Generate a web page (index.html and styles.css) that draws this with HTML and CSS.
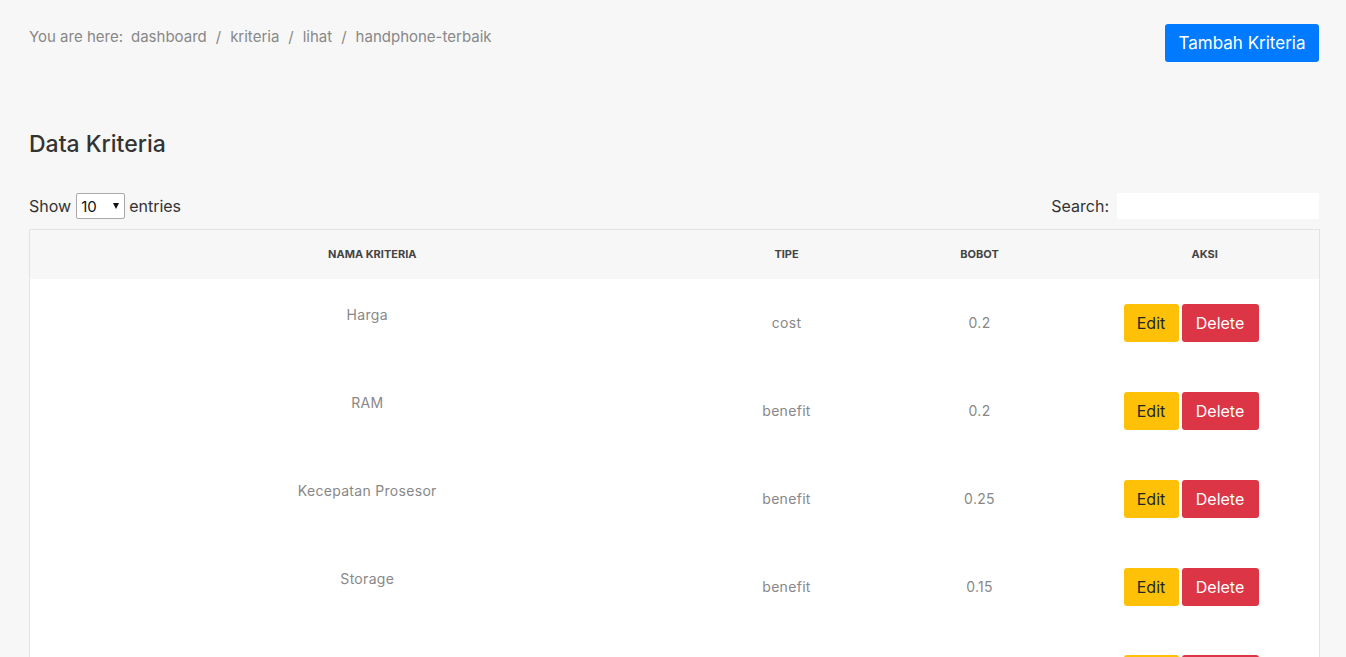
FILE: index.html
```html
<!DOCTYPE html>
<html lang="id">
<head>
<meta charset="utf-8">
<title>Data Kriteria</title>
<link rel="stylesheet" href="styles.css">
</head>
<body>
<div class="page">
  <div class="topbar">
    <nav class="crumbs">
      <span class="crumb-label">You are here:</span>
      <a class="crumb" href="#">dashboard</a>
      <span class="sep">/</span>
      <a class="crumb" href="#">kriteria</a>
      <span class="sep">/</span>
      <a class="crumb" href="#">lihat</a>
      <span class="sep">/</span>
      <span class="crumb">handphone-terbaik</span>
    </nav>
    <a class="btn btn-primary" href="#">Tambah Kriteria</a>
  </div>

  <h2 class="title">Data Kriteria</h2>

  <div class="controls">
    <label class="length">Show
      <span class="select-wrap">
        <select class="length-select">
          <option>10</option>
          <option>25</option>
          <option>50</option>
          <option>100</option>
        </select>
      </span>
      entries</label>
    <label class="search">Search: <input class="search-input" type="search"></label>
  </div>

  <table class="table">
    <colgroup>
      <col class="c1"><col class="c2"><col class="c3"><col class="c4">
    </colgroup>
    <thead>
      <tr>
        <th>Nama Kriteria</th>
        <th>Tipe</th>
        <th>Bobot</th>
        <th class="th-aksi">Aksi</th>
      </tr>
    </thead>
    <tbody>
      <tr>
        <td class="name-cell"><p class="name">Harga</p></td>
        <td>cost</td>
        <td>0.2</td>
        <td class="aksi"><a class="btn btn-warning" href="#">Edit</a><a class="btn btn-danger" href="#">Delete</a></td>
      </tr>
      <tr>
        <td class="name-cell"><p class="name">RAM</p></td>
        <td>benefit</td>
        <td>0.2</td>
        <td class="aksi"><a class="btn btn-warning" href="#">Edit</a><a class="btn btn-danger" href="#">Delete</a></td>
      </tr>
      <tr>
        <td class="name-cell"><p class="name">Kecepatan Prosesor</p></td>
        <td>benefit</td>
        <td>0.25</td>
        <td class="aksi"><a class="btn btn-warning" href="#">Edit</a><a class="btn btn-danger" href="#">Delete</a></td>
      </tr>
      <tr>
        <td class="name-cell"><p class="name">Storage</p></td>
        <td>benefit</td>
        <td>0.15</td>
        <td class="aksi"><a class="btn btn-warning" href="#">Edit</a><a class="btn btn-danger" href="#">Delete</a></td>
      </tr>
      <tr>
        <td class="name-cell"><p class="name">Kamera</p></td>
        <td>benefit</td>
        <td>0.2</td>
        <td class="aksi"><a class="btn btn-warning" href="#">Edit</a><a class="btn btn-danger" href="#">Delete</a></td>
      </tr>
    </tbody>
  </table>
</div>
</body>
</html>
```

FILE: styles.css
```css
* { box-sizing: border-box; }
html, body { margin: 0; padding: 0; }
body {
  background: #f7f7f7;
  font-family: Inter, "Open Sans", "Liberation Sans", sans-serif;
  color: #333;
  overflow: hidden;
}
.page {
  padding: 24px 27px 0 29px;
}
.topbar {
  display: flex;
  justify-content: space-between;
  align-items: flex-start;
  height: 38px;
}
.crumbs {
  display: flex;
  align-items: center;
  font-size: 15px;
  color: #888;
  padding-top: 3px;
  line-height: 20px;
}
.crumb-label { margin-right: 8px; }
.crumb { color: #888; text-decoration: none; }
.sep { margin: 0 9px; color: #888; }
.btn {
  display: inline-flex;
  align-items: center;
  justify-content: center;
  text-decoration: none;
  border-radius: 3px;
  font-size: 16px;
}
.btn-primary {
  background: #007bff;
  color: #fff;
  width: 154px;
  height: 38px;
  font-size: 17px;
}
.title {
  margin: 70px 0 0;
  font-size: 23px;
  font-weight: 500;
  color: #333;
  line-height: 24px;
}
.controls {
  display: flex;
  justify-content: space-between;
  align-items: center;
  margin-top: 37px;
  font-size: 16px;
  color: #333;
  height: 26px;
}
.length { display: flex; align-items: center; }
.select-wrap {
  position: relative;
  display: inline-block;
  margin: 0 4px 0 5px;
  height: 26px;
}
.select-wrap::after {
  content: "";
  position: absolute;
  right: 6px;
  top: 10px;
  border-left: 3.5px solid transparent;
  border-right: 3.5px solid transparent;
  border-top: 6px solid #111;
  pointer-events: none;
}
.length-select {
  -webkit-appearance: none;
  appearance: none;
  width: 49px;
  height: 26px;
  padding: 0 0 0 4px;
  font-size: 15px;
  font-family: inherit;
  color: #111;
  border: 1px solid #a9a9a9;
  background: #fff;
  border-radius: 2px;
}
.search { display: flex; align-items: center; }
.search-input {
  width: 202px;
  height: 26px;
  margin-left: 8px;
  border: none;
  background: #fff;
  outline: none;
}
.table {
  margin-top: 10px;
  width: 1290px;
  border-collapse: collapse;
  table-layout: fixed;
  border: 1px solid #e3e3e6;
  background: #fff;
}
.c1 { width: 685px; }
.c2 { width: 144px; }
.c3 { width: 242px; }
.c4 { width: 219px; }
.table th {
  background: #f7f7f7;
  height: 49px;
  font-size: 11px;
  font-weight: 700;
  text-transform: uppercase;
  color: #444;
  text-align: center;
  padding: 0;
}
.table th.th-aksi { padding-right: 10px; }
.table td {
  height: 88px;
  text-align: center;
  vertical-align: middle;
  font-size: 14px;
  letter-spacing: 0.3px;
  color: #888;
  padding: 0;
}
.table td.name-cell { padding-right: 10px; }
.name { margin: 0 0 16px; line-height: 20px; }
.table td.aksi {
  text-align: left;
  padding-left: 23px;
  letter-spacing: 0;
}
.aksi .btn { height: 38px; vertical-align: middle; }
.btn-warning {
  background: #ffc107;
  color: #212529;
  width: 55px;
  margin-right: 3px;
}
.btn-danger {
  background: #dc3545;
  color: #fff;
  width: 77px;
}
```
